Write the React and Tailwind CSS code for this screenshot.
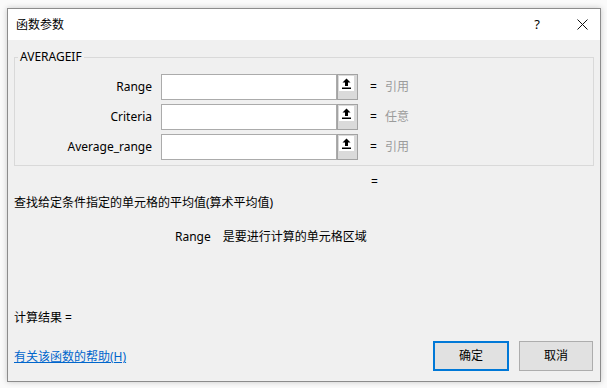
import React from 'react'

const font = { fontFamily: '"Noto Sans", "Noto Sans CJK SC", sans-serif' }

const RefButton = () => (
  <div className="w-[21px] h-[26px] border border-[#a3a3a3] bg-[#dadada] p-[1px]">
    <div className="w-[15px] h-[15px] bg-white flex items-center justify-center">
      <svg width="9" height="11" viewBox="0 0 9 11">
        <path d="M4.5 0.5 L8.5 4.5 L6 4.5 L6 8 L3 8 L3 4.5 L0.5 4.5 Z" fill="#000" />
        <rect x="0" y="9.5" width="9" height="1.5" fill="#000" />
      </svg>
    </div>
  </div>
)

const Row = ({ label, value }) => (
  <>
    <div className="text-right pr-[9px] text-[12px] leading-[26px] text-black">{label}</div>
    <div className="h-[26px] bg-white border border-[#ababab]" />
    <RefButton />
    <div className="flex items-center text-[12px] leading-[26px]">
      <span className="text-black ml-[12px]">=</span>
      <span className="text-[#9b9b9b] ml-[8px]">{value}</span>
    </div>
  </>
)

const App = () => {
  return (
    <div className="w-[607px] h-[388px] bg-[#fafafa] pt-[8px] pl-[7px]" style={font}>
      <div className="w-[594px] h-[374px] border border-[#8c8c8c] bg-[#f0f0f0] flex flex-col shadow-[0_0_6px_rgba(0,0,0,0.2)]">
        {/* title bar */}
        <div className="h-[31px] bg-white flex items-center pl-[8px] pr-[12px]">
          <span className="text-[12px] text-black">函数参数</span>
          <span className="ml-auto text-[13px] text-black mr-[37px]">?</span>
          <svg width="11" height="11" viewBox="0 0 11 11">
            <path d="M0.5 0.5 L10.5 10.5 M10.5 0.5 L0.5 10.5" stroke="#111" strokeWidth="1" />
          </svg>
        </div>

        {/* group box */}
        <fieldset className="mx-[6px] mt-[10px] border border-[#d9d9d9] pb-[5px] pt-[10px]">
          <legend className="ml-[3px] px-[2px] text-[12px] leading-[14px] text-black">AVERAGEIF</legend>
          <div className="grid grid-cols-[146px_176px_21px_1fr] gap-y-[4px]">
            <Row label="Range" value="引用" />
            <Row label="Criteria" value="任意" />
            <Row label="Average_range" value="引用" />
          </div>
        </fieldset>

        <div className="text-[12px] leading-[16px] text-black pl-[363px] mt-[8px]">=</div>
        <div className="text-[12px] leading-[16px] text-black pl-[6px] mt-[5px]">
          查找给定条件指定的单元格的平均值(算术平均值)
        </div>
        <div className="flex text-[12px] leading-[16px] text-black pl-[167px] mt-[18px]">
          <span>Range</span>
          <span className="ml-[12px]">是要进行计算的单元格区域</span>
        </div>

        <div className="text-[12px] leading-[16px] text-black pl-[6px] mt-[65px]">计算结果 =</div>

        <div className="flex items-center mt-[15px] pl-[6px] pr-[7px]">
          <a href="#" className="text-[12px] text-[#0066cc] underline self-end mb-[5px]">有关该函数的帮助(H)</a>
          <button className="ml-auto w-[76px] h-[30px] border-2 border-[#0078d7] bg-[#e1e1e1] text-[12px] text-black">确定</button>
          <button className="ml-[10px] w-[74px] h-[30px] border border-[#adadad] bg-[#e1e1e1] text-[12px] text-black">取消</button>
        </div>
      </div>
    </div>
  )
}

export default App
